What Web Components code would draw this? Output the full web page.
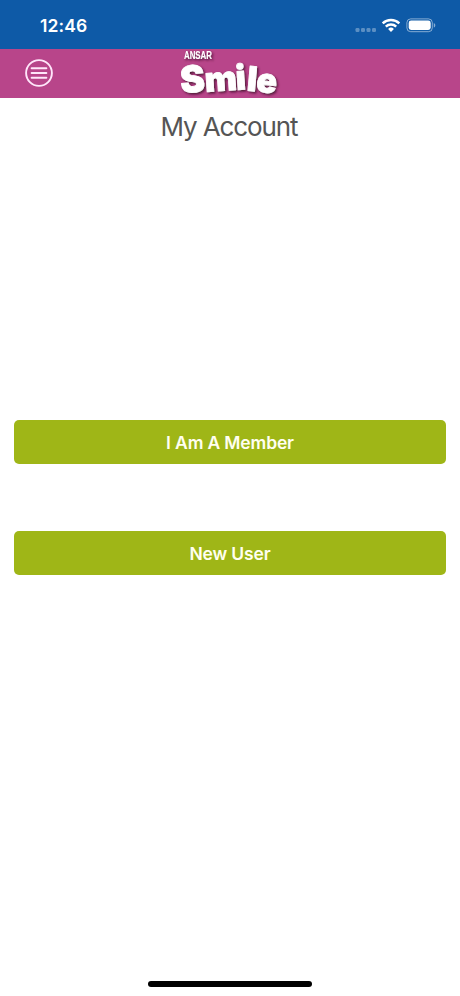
<!DOCTYPE html>
<html lang="en">
<head>
<meta charset="utf-8">
<title>My Account</title>
<style>
html, body{ margin:0; height:100%; }
body{ font-family:Inter, "Liberation Sans", sans-serif; background:#fff; overflow:hidden; }
</style>
</head>
<body>
<account-page>
  <status-bar slot="top" time="12:46"></status-bar>
  <brand-header slot="top"></brand-header>
  <span slot="title">My Account</span>
  <action-button>I Am A Member</action-button>
  <action-button>New User</action-button>
</account-page>

<script>
window.customElements.define('status-bar', class extends HTMLElement {

    constructor(){ super(); this.attachShadow({mode:'open'}); }

    connectedCallback(){
      this.shadowRoot.innerHTML =
        `
    <style>
:host{
  display:flex;
  justify-content:space-between;
  box-sizing:border-box;
  height:49px;
  padding:0 24px 0 40px;
  background:#0e5aa7;
  color:#fff;
}
time{
  font-size:17.5px;
  font-weight:600;
  line-height:22px;
  margin-top:15px;
  letter-spacing:.1px;
}
svg{ display:block; margin-top:16px; }
    </style>
    <time>${this.getAttribute('time')}</time>
    <svg width="81" height="18" viewBox="355 16 81 18">
      <g fill="#fff" fill-opacity=".32">
        <rect x="355.5" y="28" width="4" height="4" rx="1.2"/>
        <rect x="361" y="28" width="4" height="4" rx="1.2"/>
        <rect x="366.5" y="28" width="4" height="4" rx="1.2"/>
        <rect x="372" y="28" width="4" height="4" rx="1.2"/>
      </g>
      <g fill="none" stroke="#fff" stroke-width="2.4">
        <path d="M382.7 23.4a11.8 11.8 0 0 1 16.6 0"/>
        <path d="M385.8 26.7a7.4 7.4 0 0 1 10.4 0"/>
      </g>
      <path d="M388.1 29a4.1 4.1 0 0 1 5.8 0L391 32z" fill="#fff"/>
      <rect x="406.9" y="18.9" width="25.4" height="12.8" rx="3.8" fill="none" stroke="#fff" stroke-opacity=".5"/>
      <rect x="408.7" y="20.6" width="22" height="9.4" rx="2.4" fill="#fff"/>
      <path d="M433.8 23v4.6c1-.4 1.5-1.3 1.5-2.3s-.5-1.9-1.5-2.3z" fill="#fff" fill-opacity=".5"/>
    </svg>
    `;
    }
})

window.customElements.define('brand-header', class extends HTMLElement {

    constructor(){ super(); this.attachShadow({mode:'open'}); }

    connectedCallback(){
      this.shadowRoot.innerHTML =
        `
    <style>
:host{
  display:grid;
  grid-template-columns:1fr 120px 1fr;
  align-items:center;
  height:49px;
  background:#b8458a;
}
button{
  justify-self:start;
  margin:0 0 1px 24px;
  padding:0;
  border:none;
  background:none;
}
svg{ display:block; overflow:visible; }
.small{ font:700 10.5px "Liberation Sans", sans-serif; }
.big{ font:900 34px Inter, sans-serif; }
.first{ font-size:37px; }
    </style>
    <button aria-label="Menu">
      <svg width="30" height="30" viewBox="0 0 30 30" fill="none" stroke="#ffe6fa" stroke-linecap="round">
        <circle cx="15" cy="15" r="12.9" stroke-width="1.9"/>
        <path d="M7.6 10.2h14.8M7.6 15h14.8M7.6 19.8h14.8" stroke-width="1.9"/>
      </svg>
    </button>
    <svg width="120" height="49" viewBox="170 49 120 49" fill="#fff">
      <defs>
        <filter id="shade" x="-10%" y="-20%" width="125%" height="150%">
          <feDropShadow dx="1.4" dy="1.5" stdDeviation="1" flood-color="#3a0828" flood-opacity=".85"/>
        </filter>
      </defs>
      <g filter="url(#shade)">
        <text class="small" x="184" y="59.3" textLength="28" lengthAdjust="spacingAndGlyphs">ANSAR</text>
        <text class="big" x="181 205.5 236.5 246.2 255.5" y="93 92 90 90.5 91.5" rotate="-4 -4 -4 5 6" stroke="#fff" stroke-width=".8" stroke-linejoin="round"><tspan class="first">S</tspan>mile</text>
      </g>
    </svg>
    `;
    }
})

window.customElements.define('action-button', class extends HTMLElement {

    constructor(){ super(); this.attachShadow({mode:'open'}); }

    connectedCallback(){
      this.shadowRoot.innerHTML =
        `
    <style>
:host{ display:block; }
button{
  display:block;
  width:100%;
  height:44px;
  padding:0;
  border:none;
  border-radius:5px;
  background:#9fb617;
  color:#fffff0;
  font:600 17.5px Inter, "Liberation Sans", sans-serif;
  letter-spacing:-.15px;
}
    </style>
    <button><slot></slot></button>
    `;
    }
})

window.customElements.define('account-page', class extends HTMLElement {

    constructor(){ super(); this.attachShadow({mode:'open'}); }

    connectedCallback(){
      this.shadowRoot.innerHTML =
        `
    <style>
:host{
  display:flex;
  flex-direction:column;
  height:100vh;
  background:#fff;
}
h1{
  margin:12px 0 0;
  padding-right:2px;
  text-align:center;
  font-size:26px;
  line-height:34px;
  font-weight:400;
  letter-spacing:-1.1px;
  color:#555;
}
main{
  flex:1;
  display:flex;
  flex-direction:column;
  gap:67px;
  padding:276px 14px 0;
}
.home{
  width:164px;
  height:5.5px;
  margin:0 auto 9.5px;
  border-radius:3px;
  background:#000;
}
    </style>
    <slot name="top"></slot>
    <h1><slot name="title"></slot></h1>
    <main><slot></slot></main>
    <div class="home"></div>
    `;
    }
})
</script>
</body>
</html>
